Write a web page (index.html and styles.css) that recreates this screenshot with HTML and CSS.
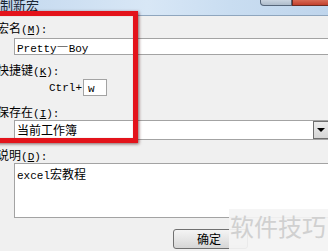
FILE: index.html
```html
<!DOCTYPE html>
<html lang="zh">

<head>
    <meta charset="UTF-8">
    <meta name="viewport" content="width=device-width, initial-scale=1.0">
    <title>录制新宏</title>
    <link rel="stylesheet" href="styles.css">
</head>

<body>
    <div class="window">
        <div class="titlebar">
            <span class="title">录制新宏</span>
            <div class="caption_buttons">
                <div class="help_btn"></div>
                <div class="close_btn"></div>
            </div>
        </div>

        <div class="form">
            <p class="label">宏名<span class="key">(<u>M</u>):</span></p>
            <div class="field text_field"><span class="latin">Pretty</span>—<span class="latin">Boy</span></div>

            <p class="label">快捷键<span class="key">(<u>K</u>):</span></p>
            <div class="shortcut">
                <span class="latin">Ctrl+</span>
                <div class="key_box"><span class="latin">w</span></div>
            </div>

            <p class="label">保存在<span class="key">(<u>I</u>):</span></p>
            <div class="field select_field">
                <span class="select_value">当前工作簿</span>
                <div class="arrow_btn"><div class="arrow"></div></div>
            </div>

            <p class="label">说明<span class="key">(<u>D</u>):</span></p>
            <div class="field memo"><span class="latin">excel</span>宏教程</div>

            <div class="actions">
                <button class="ok_btn">确定</button>
            </div>
        </div>

        <!-- highlight drawn over the screenshot -->
        <div class="highlight"></div>

        <div class="watermark">软件技巧</div>
    </div>
</body>

</html>
```

FILE: styles.css
```css
* {
    margin: 0;
    padding: 0;
    box-sizing: border-box;
}

body {
    width: 328px;
    height: 251px;
    overflow: hidden;
    background: #f0f0f0;
    font-family: "Noto Sans CJK SC", sans-serif;
    font-size: 12px;
    color: #000;
}

.window {
    position: relative;
    width: 328px;
    height: 251px;
    overflow: hidden;
}

.titlebar {
    display: flex;
    justify-content: space-between;
    height: 16px;
    background: linear-gradient(90deg, #c3d8ee 0%, #d8e7f6 45%, #c9ddf1 70%, #bfd5ec 100%);
    border-bottom: 1px solid #8fa6be;
}

.title {
    margin-left: -13px;
    margin-top: -3px;
    font-size: 13px;
    line-height: 16px;
    color: #1b2735;
}

.caption_buttons {
    display: flex;
    align-items: flex-start;
}

.help_btn {
    width: 32px;
    height: 6px;
    background: linear-gradient(#c9d4e0, #aebccb);
    border: 1px solid #56667a;
    border-top: none;
    border-radius: 0 0 0 4px;
}

.close_btn {
    width: 36px;
    height: 6px;
    background: linear-gradient(#d86a55, #c2412e);
    border: 1px solid #6b2b22;
    border-top: none;
    border-right: none;
}

.form {
    padding-top: 5px;
}

.label {
    margin-left: -3px;
    height: 14px;
    line-height: 14px;
    white-space: nowrap;
}

.key {
    font-family: "Liberation Mono", monospace;
    font-size: 11px;
}

.latin {
    font-family: "Liberation Mono", monospace;
    font-size: 11px;
}

.field {
    margin-left: 14px;
    background: #fff;
    border: 1px solid #a3a3a3;
    border-right: none;
}

.text_field {
    margin-top: 3px;
    height: 17px;
    padding-left: 2px;
    line-height: 15px;
    margin-bottom: 8px;
}

.shortcut {
    display: flex;
    align-items: center;
    gap: 1px;
    margin: 2px 0 9px 49px;
    height: 17px;
}

.key_box {
    width: 24px;
    height: 17px;
    background: #fff;
    border: 1px solid #a3a3a3;
    padding-left: 4px;
    line-height: 14px;
}

.select_field {
    display: flex;
    justify-content: space-between;
    margin-top: 1px;
    margin-bottom: 8px;
    height: 20px;
}

.select_value {
    padding-left: 2px;
    line-height: 18px;
    font-size: 12px;
}

.arrow_btn {
    display: flex;
    justify-content: center;
    align-items: center;
    width: 15px;
    height: 18px;
    background: linear-gradient(#ececec, #d6d6d6);
    border: 1px solid #6f6f6f;
    border-right: none;
}

.arrow {
    width: 0;
    height: 0;
    border-left: 4px solid transparent;
    border-right: 4px solid transparent;
    border-top: 4px solid #000;
}

.memo {
    margin-top: 1px;
    height: 55px;
    padding: 3px 0 0 2px;
    line-height: 14px;
}

.actions {
    margin: 11px 0 0 173px;
}

.ok_btn {
    width: 75px;
    height: 20px;
    padding-right: 26px;
    text-align: right;
    font-family: "Noto Sans CJK SC", sans-serif;
    font-size: 12px;
    line-height: 16px;
    background: linear-gradient(#f4f4f4 0%, #e6e6e6 50%, #d6d6d6 100%);
    border: 1px solid #707070;
    border-radius: 3px;
}

.highlight {
    position: absolute;
    left: -20px;
    top: 11px;
    width: 158px;
    height: 132px;
    border: 5px solid #e3131b;
    box-shadow: 1px 1px 3px rgba(60, 0, 0, 0.6), inset 0 0 1px rgba(120, 0, 0, 0.4);
}

.watermark {
    position: absolute;
    left: 229px;
    top: 209px;
    width: 99px;
    height: 42px;
    padding: 3px 0 0 1px;
    background: rgba(244, 244, 244, 0.92);
    color: #d0d0d0;
    font-size: 24px;
    line-height: 28px;
}
```
